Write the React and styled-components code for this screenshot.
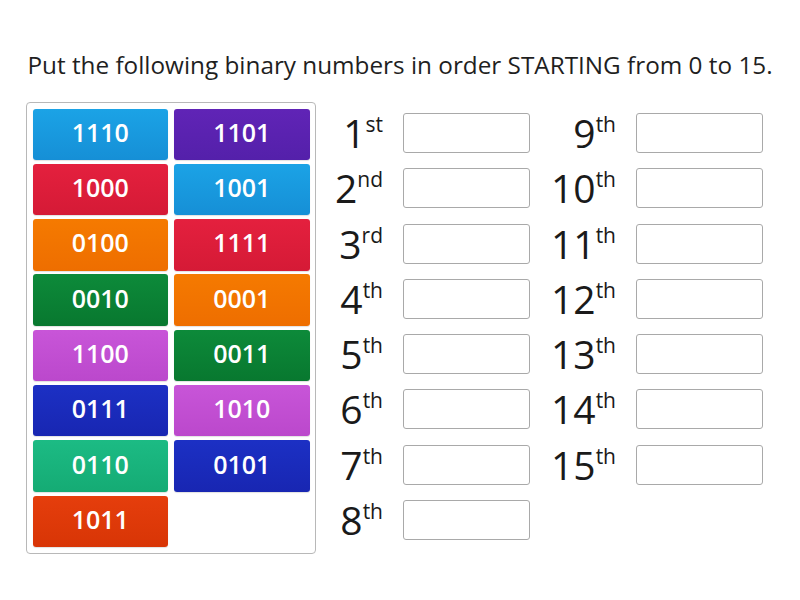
import React from 'react';
import styled, {createGlobalStyle} from "styled-components";

const GlobalStyle = createGlobalStyle`
  body {
    margin: 0;
    background: #fff;
    font-family: "Open Sans", "Noto Sans", sans-serif;
    color: #1a1a1a;
  }
`;

const Page = styled.div`
  width: 800px;
  height: 600px;
  overflow: hidden;
`;

const Title = styled.h1`
  margin: 0;
  padding-top: 47px;
  height: 55px;
  text-align: center;
  font-size: 24.3px;
  font-weight: 400;
  line-height: 36px;
  color: #1f1f1f;
`;

const Body = styled.div`
  display: flex;
  align-items: flex-start;
  padding-left: 26px;
`;

const TilePanel = styled.div`
  display: grid;
  grid-template-columns: 135.5px 135.5px;
  grid-auto-rows: 51.5px;
  column-gap: 6px;
  row-gap: 3.8px;
  padding: 5.5px;
  border: 1px solid #b8b8b8;
  border-radius: 4px;
`;

const Tile = styled.div`
  display: flex;
  align-items: center;
  justify-content: center;
  padding-bottom: 5px;
  border-radius: 3px;
  color: #fff;
  font-size: 25px;
  font-weight: 600;
  background: linear-gradient(180deg, ${p => p.$top}, ${p => p.$bottom});
  box-shadow: 0 1px 1px rgba(0, 0, 0, 0.12);
`;

const Answers = styled.div`
  display: grid;
  grid-template-columns: 61px 127px 66px 127px;
  grid-template-rows: repeat(8, 40px);
  row-gap: 15.3px;
  column-gap: 20px;
  margin-left: 6px;
  margin-top: 11px;
`;

const Label = styled.div`
  display: flex;
  justify-content: flex-end;
  align-items: flex-start;
  font-size: 39px;
  line-height: 40px;
  color: #1a1a1a;
  grid-column: ${p => p.$col};
  grid-row: ${p => p.$row};

  sup {
    font-size: 21px;
    line-height: 21px;
    margin-top: 1px;
  }
`;

const Slot = styled.div`
  box-sizing: border-box;
  border: 1px solid #a9a9a9;
  border-radius: 3px;
  background: #fff;
  grid-column: ${p => p.$col};
  grid-row: ${p => p.$row};
`;

const tiles = [
  {text: '1110', top: '#1ba3e6', bottom: '#168fd6'},
  {text: '1101', top: '#6024b6', bottom: '#5420aa'},
  {text: '1000', top: '#e4203e', bottom: '#d51a36'},
  {text: '1001', top: '#1ba3e6', bottom: '#168fd6'},
  {text: '0100', top: '#f57a00', bottom: '#ee6e00'},
  {text: '1111', top: '#e4203e', bottom: '#d51a36'},
  {text: '0010', top: '#0d8a3a', bottom: '#08782f'},
  {text: '0001', top: '#f57a00', bottom: '#ee6e00'},
  {text: '1100', top: '#c855d8', bottom: '#bb48cc'},
  {text: '0011', top: '#0d8a3a', bottom: '#08782f'},
  {text: '0111', top: '#1c30c4', bottom: '#1826b2'},
  {text: '1010', top: '#c855d8', bottom: '#bb48cc'},
  {text: '0110', top: '#1cbb84', bottom: '#15ab74'},
  {text: '0101', top: '#1c30c4', bottom: '#1826b2'},
  {text: '1011', top: '#e53e0c', bottom: '#d83506'},
];

const suffix = (n) => {
  if (n === 1) return 'st';
  if (n === 2) return 'nd';
  if (n === 3) return 'rd';
  return 'th';
};

const places = Array.from({length: 15}, (_, i) => i + 1);

export default function App() {
  return (
    <Page>
      <GlobalStyle/>
      <Title>Put the following binary numbers in order STARTING from 0 to 15.</Title>
      <Body>
        <TilePanel>
          {tiles.map(t => (
            <Tile key={t.text} $top={t.top} $bottom={t.bottom}>{t.text}</Tile>
          ))}
        </TilePanel>
        <Answers>
          {places.map(n => {
            const col = n <= 8 ? 1 : 3;
            const row = n <= 8 ? n : n - 8;
            return (
              <React.Fragment key={n}>
                <Label $col={col} $row={row}>{n}<sup>{suffix(n)}</sup></Label>
                <Slot $col={col + 1} $row={row}/>
              </React.Fragment>
            );
          })}
        </Answers>
      </Body>
    </Page>
  );
}
